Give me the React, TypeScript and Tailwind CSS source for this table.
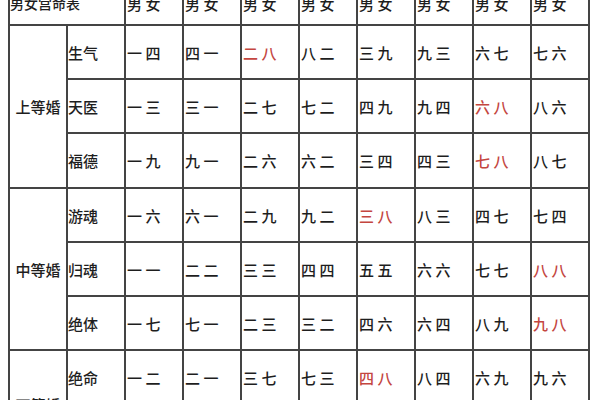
import React from "react";

type Cell = { t: string; red?: boolean };

const groups: { name: string; rows: { label: string; cells: Cell[] }[] }[] = [
  {
    name: "上等婚",
    rows: [
      { label: "生气", cells: [{ t: "一 四" }, { t: "四 一" }, { t: "二 八", red: true }, { t: "八 二" }, { t: "三 九" }, { t: "九 三" }, { t: "六 七" }, { t: "七 六" }] },
      { label: "天医", cells: [{ t: "一 三" }, { t: "三 一" }, { t: "二 七" }, { t: "七 二" }, { t: "四 九" }, { t: "九 四" }, { t: "六 八", red: true }, { t: "八 六" }] },
      { label: "福德", cells: [{ t: "一 九" }, { t: "九 一" }, { t: "二 六" }, { t: "六 二" }, { t: "三 四" }, { t: "四 三" }, { t: "七 八", red: true }, { t: "八 七" }] },
    ],
  },
  {
    name: "中等婚",
    rows: [
      { label: "游魂", cells: [{ t: "一 六" }, { t: "六 一" }, { t: "二 九" }, { t: "九 二" }, { t: "三 八", red: true }, { t: "八 三" }, { t: "四 七" }, { t: "七 四" }] },
      { label: "归魂", cells: [{ t: "一 一" }, { t: "二 二" }, { t: "三 三" }, { t: "四 四" }, { t: "五 五" }, { t: "六 六" }, { t: "七 七" }, { t: "八 八", red: true }] },
      { label: "绝体", cells: [{ t: "一 七" }, { t: "七 一" }, { t: "二 三" }, { t: "三 二" }, { t: "四 六" }, { t: "六 四" }, { t: "八 九" }, { t: "九 八", red: true }] },
    ],
  },
  {
    name: "下等婚",
    rows: [
      { label: "绝命", cells: [{ t: "一 二" }, { t: "二 一" }, { t: "三 七" }, { t: "七 三" }, { t: "四 八", red: true }, { t: "八 四" }, { t: "六 九" }, { t: "九 六" }] },
      { label: "", cells: [{ t: "" }, { t: "" }, { t: "" }, { t: "" }, { t: "" }, { t: "" }, { t: "" }, { t: "" }] },
    ],
  },
];

export default function App() {
  return (
    <div
      className="w-[600px] h-[400px] overflow-hidden bg-white"
      style={{ fontFamily: '"Noto Sans CJK SC", "Noto Sans", sans-serif' }}
    >
      <div className="ml-[8px] mt-[-20px] grid w-fit grid-cols-[repeat(10,56px)] grid-rows-[42px_52px_52px_53px_52px_52px_52px_52px_52px] gap-[2px] bg-[#444] p-[2px] text-[15px] leading-none font-medium text-[#1e1e1e]">
        <div className="col-span-2 bg-white flex items-center pl-0 text-[14px]">男女宫命表</div>
        {Array.from({ length: 8 }).map((_, i) => (
          <div key={i} className="bg-white flex items-center pl-[1px]">
            男 女
          </div>
        ))}
        {groups.map((g) => (
          <React.Fragment key={g.name}>
            {g.rows.map((r, ri) => (
              <React.Fragment key={ri}>
                {ri === 0 && (
                  <div
                    className={`${g.rows.length === 3 ? "row-span-3" : "row-span-2"} bg-white flex items-center justify-center`}
                  >
                    {g.name}
                  </div>
                )}
                <div className="bg-white flex items-center pl-0">{r.label}</div>
                {r.cells.map((c, ci) => (
                  <div
                    key={ci}
                    className={`bg-white flex items-center pl-[1px] ${c.red ? "text-[#c4463f]" : ""}`}
                  >
                    {c.t}
                  </div>
                ))}
              </React.Fragment>
            ))}
          </React.Fragment>
        ))}
      </div>
    </div>
  );
}
